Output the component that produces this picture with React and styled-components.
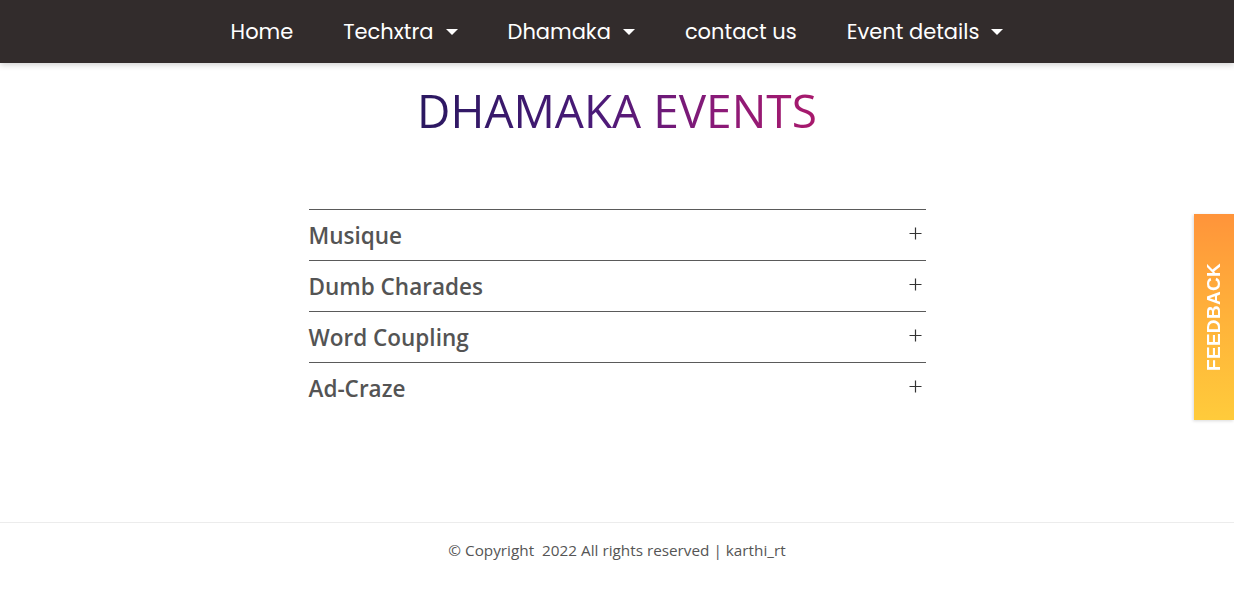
import React, { useState } from "react";
import styled, { createGlobalStyle } from "styled-components";

const GlobalStyle = createGlobalStyle`
  body {
    margin: 0;
    background: #ffffff;
    font-family: "Open Sans", "Noto Sans", sans-serif;
  }
`;

const NavBar = styled.nav`
  display: flex;
  justify-content: center;
  align-items: center;
  height: 63px;
  background-color: #322c2c;
  box-shadow: 0 2px 6px rgba(0, 0, 0, 0.18);
  position: relative;
  z-index: 2;
`;

const NavItem = styled.a`
  display: flex;
  align-items: center;
  padding: 0 25px;
  font-family: "Poppins", "Open Sans", sans-serif;
  font-size: 21px;
  color: #ffffff;
  text-decoration: none;
  cursor: pointer;
`;

const Caret = styled.span`
  width: 0;
  height: 0;
  margin-left: 12px;
  border-left: 6px solid transparent;
  border-right: 6px solid transparent;
  border-top: 6px solid #ffffff;
`;

const Main = styled.main`
  display: flex;
  flex-direction: column;
  align-items: center;
  padding-top: 16px;
  padding-bottom: 109px;
`;

const Title = styled.h1`
  margin: 0 0 68px;
  font-family: "Open Sans", sans-serif;
  font-weight: 400;
  font-size: 46px;
  line-height: 62px;
  background: linear-gradient(90deg, #2a1860 0%, #4a1a78 45%, #8a1a78 75%, #a8196c 100%);
  -webkit-background-clip: text;
  background-clip: text;
  color: transparent;
`;

const Accordion = styled.div`
  width: 617px;
`;

const Row = styled.div`
  display: flex;
  justify-content: space-between;
  align-items: center;
  height: 50px;
  border-top: 1px solid #5a5a5a;
  cursor: pointer;
`;

const RowTitle = styled.span`
  font-family: "Open Sans", sans-serif;
  font-weight: 600;
  font-size: 22.5px;
  color: #545454;
  padding-top: 1px;
`;

const PlusIcon = styled.svg`
  width: 13px;
  height: 13px;
  margin-right: 4px;
  margin-bottom: 4px;
`;

const Footer = styled.footer`
  display: flex;
  justify-content: center;
  border-top: 1px solid #ececec;
  padding: 17px 0 30px;
`;

const FooterText = styled.p`
  margin: 0;
  font-family: "Open Sans", sans-serif;
  font-size: 15.3px;
  color: #555555;
`;

const FeedbackTab = styled.button`
  position: fixed;
  right: 0;
  top: 214px;
  width: 40px;
  height: 206px;
  border: none;
  padding: 0;
  background: linear-gradient(180deg, #ff943a 0%, #ffb23a 50%, #ffcb3b 100%);
  box-shadow: -1px 1px 3px rgba(0, 0, 0, 0.15);
  display: flex;
  align-items: center;
  justify-content: center;
  cursor: pointer;
`;

const FeedbackLabel = styled.span`
  transform: rotate(-90deg);
  white-space: nowrap;
  font-family: "Liberation Sans", Arial, sans-serif;
  font-weight: 700;
  font-size: 19px;
  color: #ffffff;
  letter-spacing: 0.3px;
`;

const events = ["Musique", "Dumb Charades", "Word Coupling", "Ad-Craze"];

function Plus() {
  return (
    <PlusIcon viewBox="0 0 13 13">
      <path d="M6.5 0.5v12M0.5 6.5h12" stroke="#333" strokeWidth="1.2" fill="none" />
    </PlusIcon>
  );
}

export default function App() {
  const [open, setOpen] = useState(null);

  return (
    <>
      <GlobalStyle />
      <NavBar>
        <NavItem>Home</NavItem>
        <NavItem>
          Techxtra
          <Caret />
        </NavItem>
        <NavItem>
          Dhamaka
          <Caret />
        </NavItem>
        <NavItem>contact us</NavItem>
        <NavItem>
          Event details
          <Caret />
        </NavItem>
      </NavBar>
      <Main>
        <Title>DHAMAKA EVENTS</Title>
        <Accordion>
          {events.map((name, i) => (
            <Row key={name} onClick={() => setOpen(open === i ? null : i)}>
              <RowTitle>{name}</RowTitle>
              <Plus />
            </Row>
          ))}
        </Accordion>
      </Main>
      <Footer>
        <FooterText>© Copyright&nbsp; 2022 All rights reserved | karthi_rt</FooterText>
      </Footer>
      <FeedbackTab>
        <FeedbackLabel>FEEDBACK</FeedbackLabel>
      </FeedbackTab>
    </>
  );
}
